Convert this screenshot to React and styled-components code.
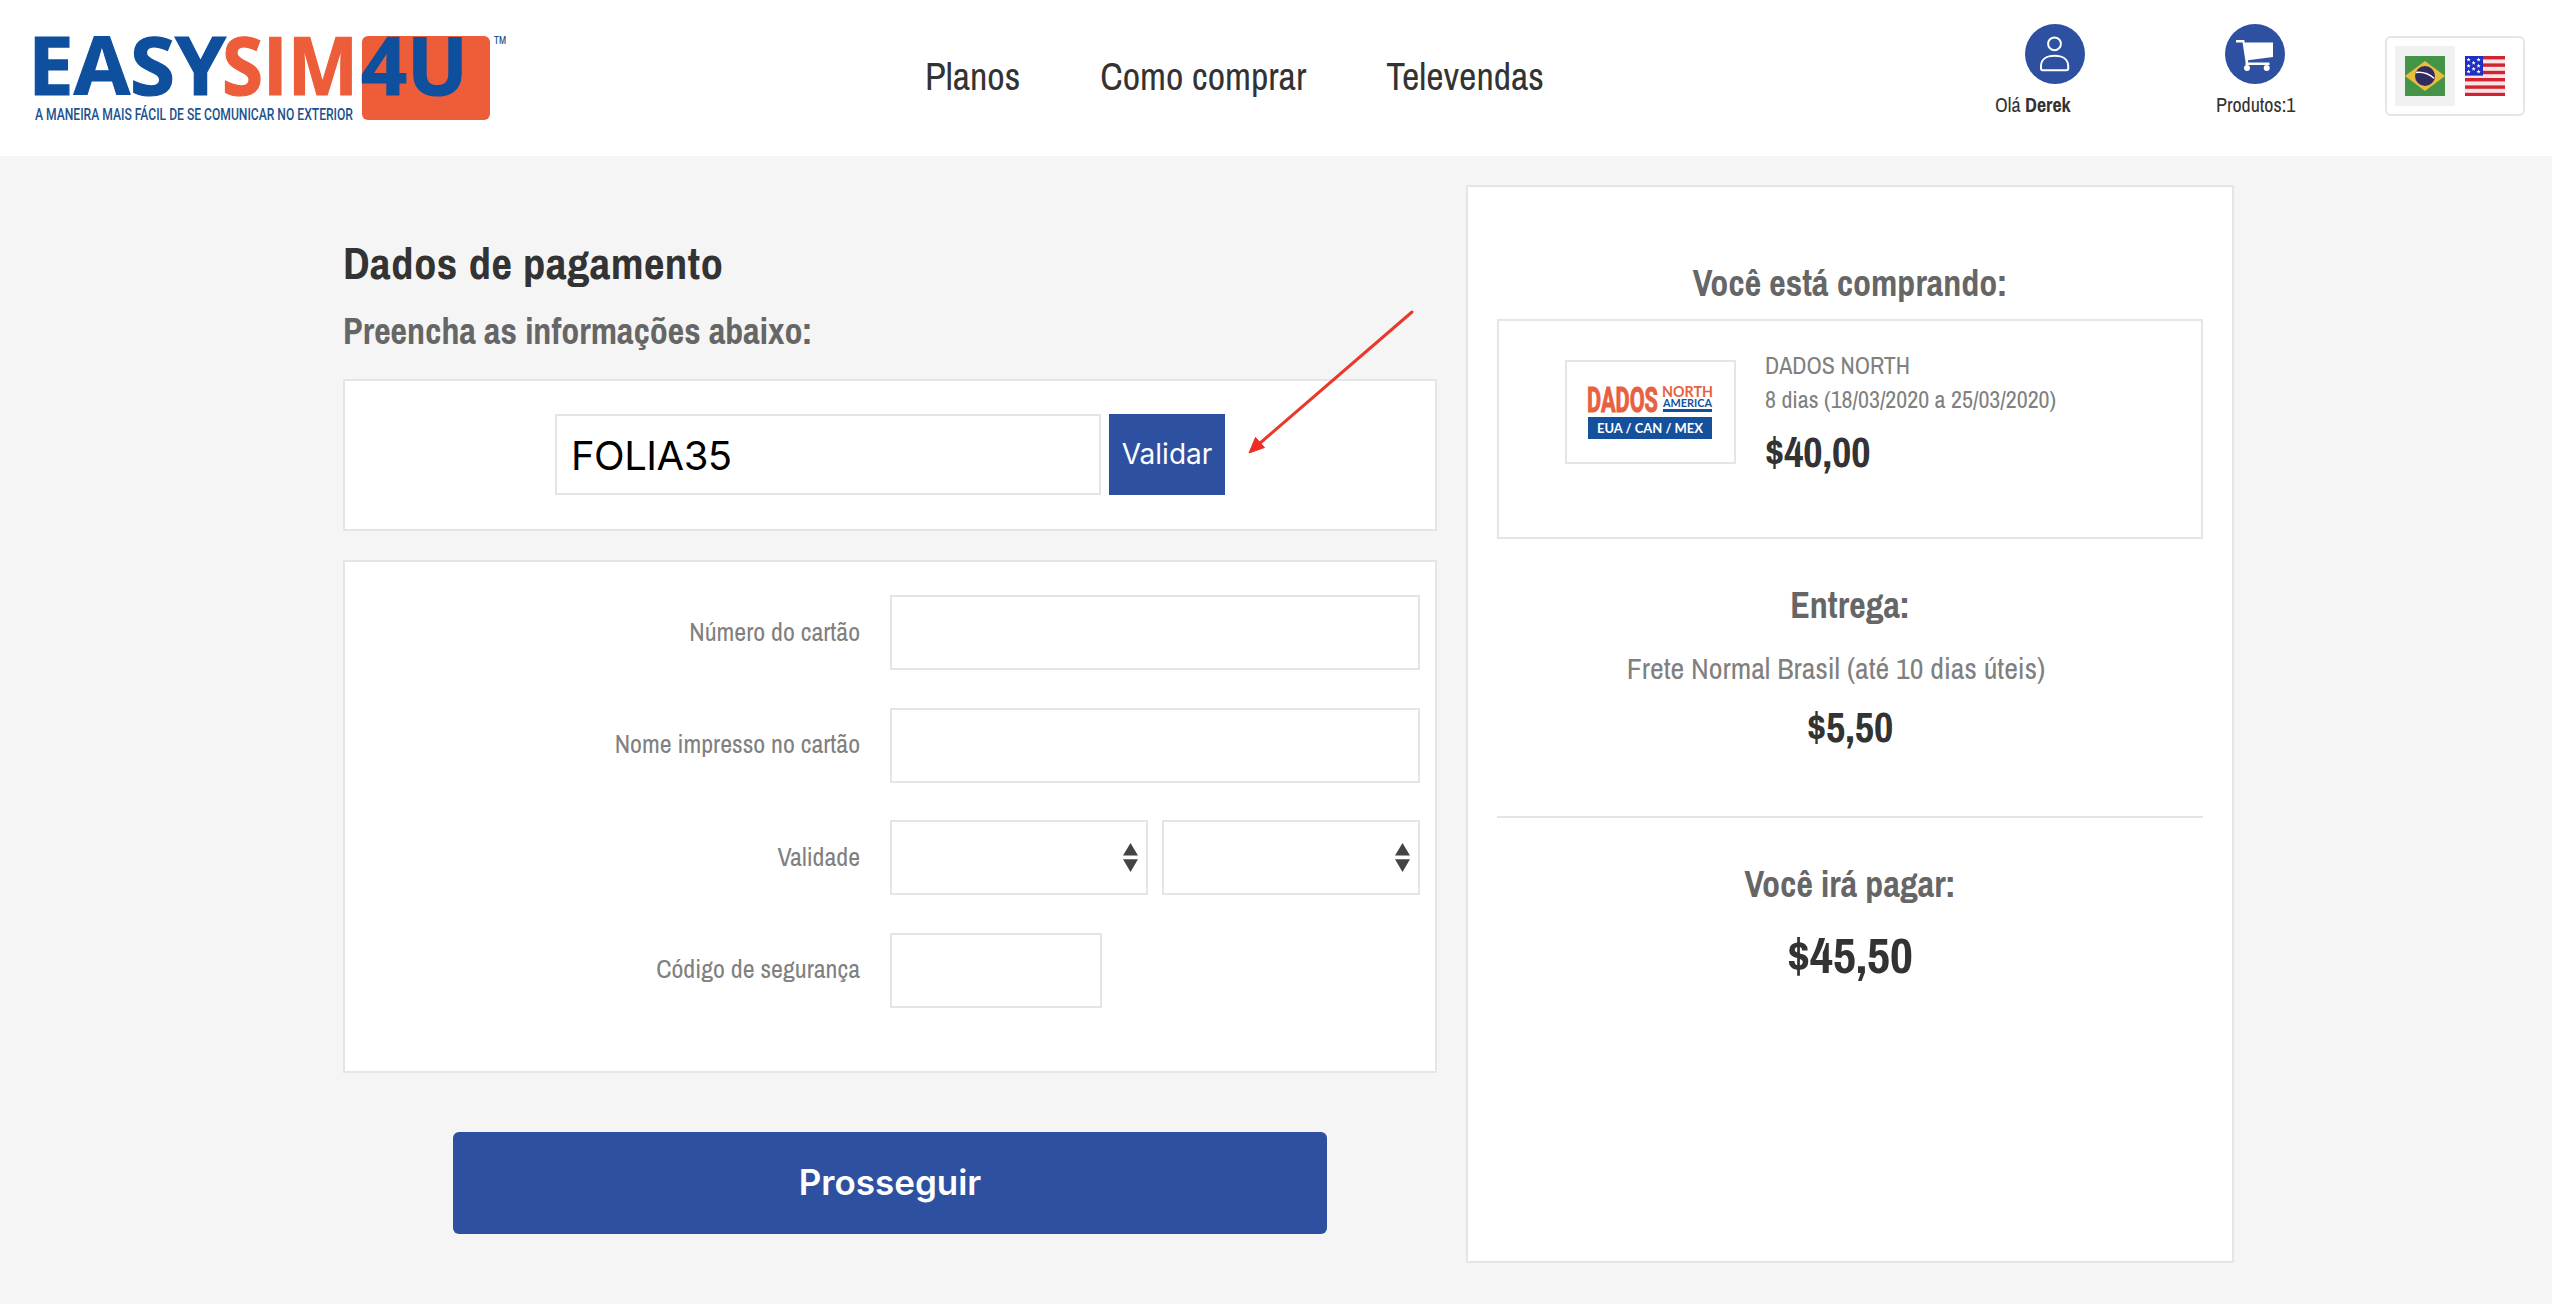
import React, { useState } from "react";
import styled, { createGlobalStyle } from "styled-components";

const blue = "#2e50a1";
const line = "#e5e5e5";
const stars = [
  [3.6, 3.6],
  [13.6, 3.6],
  [8.6, 6.8],
  [3.6, 9.8],
  [13.6, 9.8],
  [8.6, 12.8],
  [3.6, 15.6],
  [13.6, 15.6],
];

export default function App() {
  const [coupon, setCoupon] = useState("FOLIA35");

  return (
    <Page>
      <GlobalStyle />
      <Header>
        <Logo />
        <Nav>
          <NavLink>Planos</NavLink>
          <NavLink>Como comprar</NavLink>
          <NavLink>Televendas</NavLink>
        </Nav>
        <Account>
          <Round $left="30px">
            <UserIcon />
          </Round>
          <Small>
            Olá <b>Derek</b>
          </Small>
        </Account>
        <Cart>
          <Round $left="9px">
            <CartIcon />
          </Round>
          <Small>Produtos:1</Small>
        </Cart>
        <Flags>
          <FlagCell $active>
            <BrazilFlag />
          </FlagCell>
          <FlagCell>
            <UsaFlag />
          </FlagCell>
        </Flags>
      </Header>

      <Main>
        <Payment>
          <Title>Dados de pagamento</Title>
          <Subtitle>Preencha as informações abaixo:</Subtitle>
          <CouponCard>
            <CouponInput
              name="coupon"
              value={coupon}
              onChange={(e) => setCoupon(e.target.value)}
            />
            <Validate type="button">Validar</Validate>
            <Arrow />
          </CouponCard>
          <FormCard>
            <Row>
              <Label htmlFor="number">Número do cartão</Label>
              <Input id="number" name="number" />
            </Row>
            <Row>
              <Label htmlFor="holder">Nome impresso no cartão</Label>
              <Input id="holder" name="holder" />
            </Row>
            <Row>
              <Label>Validade</Label>
              <Selects>
                <SelectBox />
                <SelectBox />
              </Selects>
            </Row>
            <Row>
              <Label htmlFor="cvv">Código de segurança</Label>
              <Input id="cvv" name="cvv" $width="212px" />
            </Row>
          </FormCard>
          <Submit type="button">Prosseguir</Submit>
        </Payment>

        <Summary>
          <SummaryTitle>Você está comprando:</SummaryTitle>
          <Product>
            <Thumb>
              <ProductLogo />
            </Thumb>
            <div>
              <ProductText>DADOS NORTH</ProductText>
              <ProductText>8 dias (18/03/2020 a 25/03/2020)</ProductText>
              <Price $height="72px">$40,00</Price>
            </div>
          </Product>
          <Delivery>
            <SummaryTitle>Entrega:</SummaryTitle>
            <Shipping>Frete Normal Brasil (até 10 dias úteis)</Shipping>
            <Price $height="50px">$5,50</Price>
          </Delivery>
          <SummaryTitle>Você irá pagar:</SummaryTitle>
          <Price $size="50px" $height="94px">
            $45,50
          </Price>
        </Summary>
      </Main>
    </Page>
  );
}

function Logo() {
  return (
    <LogoSvg viewBox="0 0 480 100" width="480" height="100">
      <rect x="327" y="6" width="128" height="84" rx="6" fill="#ed5d39" />
      <g fontFamily="Open Sans, sans-serif" fontSize="81.5" fontWeight="700" strokeWidth="1.2">
        <text x="-7" y="64.5" fill="#0e4f9e" stroke="#0e4f9e" textLength="198" lengthAdjust="spacingAndGlyphs">
          EASY
        </text>
        <text x="187" y="64.5" fill="#ed5d39" stroke="#ed5d39" textLength="136" lengthAdjust="spacingAndGlyphs">
          SIM
        </text>
        <text x="326" y="64.5" fill="#0e4f9e" stroke="#0e4f9e" textLength="107" lengthAdjust="spacingAndGlyphs">
          4U
        </text>
      </g>
      <g fontFamily="Roboto, sans-serif" fontWeight="500" fill="#1c528f">
        <text x="0" y="90" fontSize="16" textLength="318" lengthAdjust="spacingAndGlyphs">
          A MANEIRA MAIS FÁCIL DE SE COMUNICAR NO EXTERIOR
        </text>
        <text x="459" y="14" fontSize="10.5" textLength="12" lengthAdjust="spacingAndGlyphs">
          TM
        </text>
      </g>
    </LogoSvg>
  );
}

function UserIcon() {
  return (
    <svg width="60" height="60" fill="none" stroke="#fff" strokeWidth="2">
      <circle cx="29.5" cy="19.8" r="6.4" />
      <path d="M16 44.5V42c0-7 6-10.3 13.6-10.3S43.2 35 43.2 42v2.5q0 1.7-1.7 1.7h-23.8q-1.7 0-1.7-1.7z" />
    </svg>
  );
}

function CartIcon() {
  return (
    <svg width="60" height="60" fill="#fff">
      <path d="M11 16h8.3l.4 2.4H48V33L23 36.3l.2 2.2h21.3V41H20.5v-3.2L17.6 18.4H11z" />
      <circle cx="22" cy="44" r="3" />
      <circle cx="41.7" cy="44" r="3" />
    </svg>
  );
}

function BrazilFlag() {
  return (
    <svg width="40" height="40">
      <rect width="40" height="40" fill="#459347" />
      <path d="M20 5L40 20 20 35 0 20z" fill="#e9bd3d" />
      <circle cx="20" cy="20" r="10" fill="#302c60" />
      <path d="M11 16.5Q21.5 15.5 29 22.3" fill="none" stroke="#fff" strokeWidth="1.5" />
    </svg>
  );
}

function UsaFlag() {
  return (
    <svg width="40" height="40">
      <rect width="40" height="40" fill="#fde3e8" />
      {[0, 7.4, 14.8, 22, 29.4, 36.8].map((y) => (
        <rect key={y} y={y} width="40" height="3.4" fill="#cf2530" />
      ))}
      <rect width="18" height="19.6" fill="#1f2fc4" />
      {stars.map(([x, y]) => (
        <path
          key={`${x}-${y}`}
          transform={`translate(${x} ${y})`}
          d="M0-2.1L.6-.6 2.1-.6.9.4 1.4 1.9 0 1-1.4 1.9-.9.4-2.1-.6-.6-.6z"
          fill="#fff"
        />
      ))}
    </svg>
  );
}

function ProductLogo() {
  return (
    <ProductSvg width="124" height="54">
      <text
        x="-1"
        y="25.5"
        fontFamily="Roboto, sans-serif"
        fontSize="35"
        fontWeight="700"
        fill="#e8603f"
        stroke="#e8603f"
        strokeWidth="1"
        textLength="71"
        lengthAdjust="spacingAndGlyphs"
      >
        DADOS
      </text>
      <g fontFamily="Lato, sans-serif" fontWeight="700">
        <text x="74" y="10.5" fontSize="14.5" fill="#e8603f" textLength="51" lengthAdjust="spacingAndGlyphs">
          NORTH
        </text>
        <text x="75" y="20.5" fontSize="11.5" fill="#14509c" textLength="49" lengthAdjust="spacingAndGlyphs">
          AMERICA
        </text>
      </g>
      <rect x="75" y="23" width="49" height="3" fill="#14509c" />
      <rect y="31" width="124" height="22" fill="#14509c" />
      <text
        x="9"
        y="46.7"
        fontFamily="Lato, sans-serif"
        fontSize="13.5"
        fontWeight="700"
        fill="#fff"
        textLength="106"
        lengthAdjust="spacingAndGlyphs"
      >
        EUA / CAN / MEX
      </text>
    </ProductSvg>
  );
}

function SelectBox() {
  return (
    <Select>
      <svg width="15" height="29" fill="#444">
        <path d="M0 12.5L7.5 0 15 12.5zM0 16.2h15L7.5 29z" />
      </svg>
    </Select>
  );
}

function Arrow() {
  return (
    <ArrowSvg width="170" height="150">
      <path d="M165 5L12 137" stroke="#e8392a" strokeWidth="3" strokeLinecap="round" />
      <path d="M2 146L8.5 130.5 17.5 140.5z" fill="#ee2c24" stroke="#ee2c24" />
    </ArrowSvg>
  );
}

const GlobalStyle = createGlobalStyle`
  * {
    box-sizing: border-box;
  }
  body {
    margin: 0;
    background: #f5f5f5;
    color: #333;
    font-family: "Archivo Narrow", "Liberation Sans Narrow", "Liberation Sans", sans-serif;
  }
  svg {
    display: block;
  }
`;

const Page = styled.div`
  width: 2552px;
  height: 1304px;
  overflow: hidden;
`;

const Header = styled.header`
  display: flex;
  align-items: flex-start;
  height: 156px;
  background: #fff;
`;
const LogoSvg = styled.svg`
  margin: 30px 0 0 35px;
  overflow: visible;
`;
const Nav = styled.nav`
  display: flex;
  gap: 80px;
  width: 1070px;
  margin: 54px 0 0 410px;
`;
const NavLink = styled.a`
  font-size: 38px;
  line-height: 46px;
  white-space: nowrap;
`;
const Account = styled.div`
  width: 221px;
  padding-top: 24px;
`;
const Cart = styled.div`
  width: 169px;
  padding-top: 24px;
`;
const Round = styled.div`
  width: 60px;
  height: 60px;
  margin-left: ${(props) => props.$left};
  border-radius: 50%;
  background: ${blue};
`;
const Small = styled.p`
  margin: 9px 0 0;
  font-size: 20px;
  line-height: 24px;
`;
const Flags = styled.div`
  display: flex;
  width: 140px;
  height: 80px;
  margin-top: 36px;
  padding: 8px;
  border: 2px solid ${line};
  border-radius: 6px;
`;
const FlagCell = styled.div`
  padding: 10px;
  background: ${(props) => (props.$active ? "#f1f1f1" : "transparent")};
`;

const Main = styled.main`
  display: flex;
  align-items: flex-start;
  gap: 29px;
  padding: 29px 0 0 343px;
`;
const Payment = styled.section`
  width: 1094px;
`;
const Title = styled.h1`
  margin: 48px 0 0;
  font-size: 45px;
  line-height: 60px;
  letter-spacing: 0.4px;
`;
const Subtitle = styled.h2`
  margin: 16px 0 0;
  color: #666;
  font-size: 36px;
  line-height: 44px;
`;
const Card = styled.div`
  border: 2px solid ${line};
  background: #fff;
`;
const CouponCard = styled(Card)`
  position: relative;
  display: flex;
  gap: 8px;
  height: 152px;
  margin-top: 26px;
  padding: 33px 0 0 210px;
`;
const CouponInput = styled.input`
  width: 546px;
  height: 81px;
  padding: 2px 14px 0;
  border: 2px solid ${line};
  color: #000;
  font-family: Inter, sans-serif;
  font-size: 40px;
  letter-spacing: -0.5px;
`;
const Validate = styled.button`
  width: 116px;
  height: 81px;
  padding: 0 0 1px;
  border: none;
  background: ${blue};
  color: #fff;
  font-family: Inter, sans-serif;
  font-size: 28px;
`;
const ArrowSvg = styled.svg`
  position: absolute;
  top: -74px;
  left: 902px;
`;
const FormCard = styled(Card)`
  display: flex;
  flex-direction: column;
  gap: 37px;
  height: 513px;
  margin-top: 29px;
  padding: 33px 15px 0 0;
`;
const Row = styled.div`
  display: grid;
  grid-template-columns: 515px 530px;
  gap: 30px;
  align-items: center;
  height: 75.5px;
`;
const Label = styled.label`
  padding-bottom: 2px;
  color: #808080;
  font-size: 26px;
  line-height: 30px;
  text-align: right;
`;
const Input = styled.input`
  width: ${(props) => props.$width || "100%"};
  height: 75px;
  border: 2px solid ${line};
  background: #fff;
  font-size: 26px;
`;
const Selects = styled.div`
  display: grid;
  grid-template-columns: 1fr 1fr;
  gap: 14px;
`;
const Select = styled.div`
  display: flex;
  align-items: center;
  justify-content: flex-end;
  height: 75px;
  padding-right: 8px;
  border: 2px solid ${line};
`;
const Submit = styled.button`
  display: block;
  width: 874px;
  height: 102px;
  margin: 59px auto 0;
  padding: 0 0 2px;
  border: none;
  border-radius: 6px;
  background: ${blue};
  color: #fff;
  font-family: Inter, sans-serif;
  font-size: 35px;
  font-weight: 600;
`;

const Summary = styled(Card)`
  width: 768px;
  height: 1078px;
  padding: 72px 29px 0;
  text-align: center;
`;
const SummaryTitle = styled.h3`
  margin: 0;
  color: #666;
  font-size: 36px;
  line-height: 48px;
`;
const Product = styled(Card)`
  display: flex;
  gap: 29px;
  height: 220px;
  margin-top: 12px;
  padding: 27px 0 0 66px;
  text-align: left;
`;
const Thumb = styled(Card)`
  width: 171px;
  height: 104px;
  margin-top: 12px;
  padding: 24px 0 0 21px;
`;
const ProductSvg = styled.svg`
  overflow: visible;
`;
const ProductText = styled.p`
  margin: 0;
  color: #808080;
  font-size: 24px;
  line-height: 34px;
`;
const Price = styled.p`
  margin: 0;
  font-size: ${(props) => props.$size || "42px"};
  font-weight: bold;
  line-height: ${(props) => props.$height};
`;
const Delivery = styled.div`
  height: 279px;
  margin-bottom: 42px;
  padding-top: 42px;
  border-bottom: 2px solid ${line};
`;
const Shipping = styled.p`
  margin: 19px 28px 14px 0;
  color: #808080;
  font-size: 30px;
  line-height: 40px;
`;
